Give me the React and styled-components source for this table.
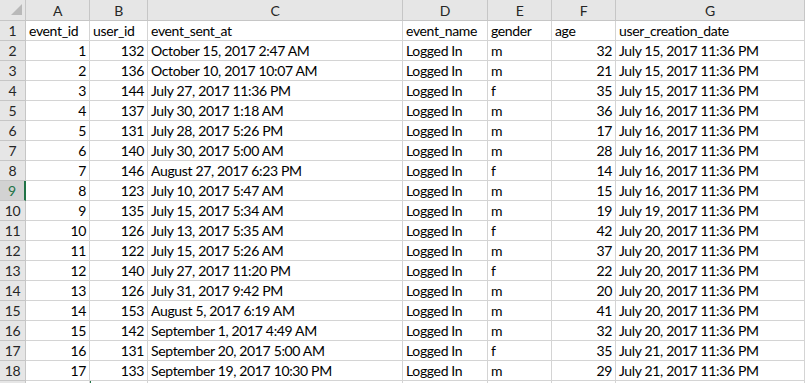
import React from 'react'
import styled, { createGlobalStyle } from 'styled-components'

const GlobalStyle = createGlobalStyle`
	html, body {
		margin: 0;
		padding: 0;
		background: #ffffff;
		overflow: hidden;
	}
`

const COLUMNS = '26px 64px 58px 255px 85px 64px 64px 1fr'

const Sheet = styled.div`
	width: 805px;
	height: 383px;
	overflow: hidden;
	font-family: Lato, 'Liberation Sans', sans-serif;
	font-size: 14px;
	letter-spacing: -0.35px;
	color: #000;
	background: #fff;
`

const Row = styled.div`
	display: grid;
	grid-template-columns: ${COLUMNS};
	height: ${props => (props.head ? '21px' : '20px')};
`

const ColumnHead = styled.div`
	box-sizing: border-box;
	background: #e6e6e6;
	border-right: 1px solid #c6c6c6;
	border-bottom: 1px solid #c6c6c6;
	color: #262626;
	display: flex;
	align-items: center;
	justify-content: center;
	padding-top: 1px;
`

const Corner = styled(ColumnHead)`
	position: relative;
	svg {
		position: absolute;
		left: 11px;
		top: 4px;
	}
`

const RowHead = styled.div`
	box-sizing: border-box;
	background: ${props => (props.selected ? '#d2d2d2' : '#e6e6e6')};
	color: ${props => (props.selected ? '#217346' : '#262626')};
	border-right: ${props =>
		props.selected ? '2px solid #217346' : '1px solid #c6c6c6'};
	border-bottom: 1px solid #c6c6c6;
	display: flex;
	align-items: center;
	justify-content: center;
`

const Cell = styled.div`
	box-sizing: border-box;
	position: relative;
	border-right: 1px solid #d4d4d4;
	border-bottom: 1px solid #d4d4d4;
	padding: 0 ${props => (props.num ? '3px' : '2px')} 0 3px;
	display: flex;
	align-items: center;
	justify-content: ${props => (props.num ? 'flex-end' : 'flex-start')};
	white-space: nowrap;
	overflow: hidden;
	${props =>
		props.marker &&
		`
		&::before {
			content: '';
			position: absolute;
			left: -2px;
			top: 0;
			width: 3px;
			height: 3px;
			background: #217346;
		}
	`}
`

const letters = ['A', 'B', 'C', 'D', 'E', 'F', 'G']

const header = [
	'event_id',
	'user_id',
	'event_sent_at',
	'event_name',
	'gender',
	'age',
	'user_creation_date'
]

const rows = [
	[1, 132, 'October 15, 2017 2:47 AM', 'm', 32, 'July 15, 2017 11:36 PM'],
	[2, 136, 'October 10, 2017 10:07 AM', 'm', 21, 'July 15, 2017 11:36 PM'],
	[3, 144, 'July 27, 2017 11:36 PM', 'f', 35, 'July 15, 2017 11:36 PM'],
	[4, 137, 'July 30, 2017 1:18 AM', 'm', 36, 'July 16, 2017 11:36 PM'],
	[5, 131, 'July 28, 2017 5:26 PM', 'm', 17, 'July 16, 2017 11:36 PM'],
	[6, 140, 'July 30, 2017 5:00 AM', 'm', 28, 'July 16, 2017 11:36 PM'],
	[7, 146, 'August 27, 2017 6:23 PM', 'f', 14, 'July 16, 2017 11:36 PM'],
	[8, 123, 'July 10, 2017 5:47 AM', 'm', 15, 'July 16, 2017 11:36 PM'],
	[9, 135, 'July 15, 2017 5:34 AM', 'm', 19, 'July 19, 2017 11:36 PM'],
	[10, 126, 'July 13, 2017 5:35 AM', 'f', 42, 'July 20, 2017 11:36 PM'],
	[11, 122, 'July 15, 2017 5:26 AM', 'm', 37, 'July 20, 2017 11:36 PM'],
	[12, 140, 'July 27, 2017 11:20 PM', 'f', 22, 'July 20, 2017 11:36 PM'],
	[13, 126, 'July 31, 2017 9:42 PM', 'm', 20, 'July 20, 2017 11:36 PM'],
	[14, 153, 'August 5, 2017 6:19 AM', 'm', 41, 'July 20, 2017 11:36 PM'],
	[15, 142, 'September 1, 2017 4:49 AM', 'm', 32, 'July 20, 2017 11:36 PM'],
	[16, 131, 'September 20, 2017 5:00 AM', 'f', 35, 'July 21, 2017 11:36 PM'],
	[17, 133, 'September 19, 2017 10:30 PM', 'm', 29, 'July 21, 2017 11:36 PM']
]

const SELECTED_ROW = 9

export default function App() {
	return (
		<Sheet>
			<GlobalStyle />
			<Row head>
				<Corner>
					<svg width="11" height="11" viewBox="0 0 11 11">
						<polygon points="11,0 11,11 0,11" fill="#b9b9b9" />
					</svg>
				</Corner>
				{letters.map(l => (
					<ColumnHead key={l}>{l}</ColumnHead>
				))}
			</Row>
			<Row>
				<RowHead>1</RowHead>
				{header.map(h => (
					<Cell key={h}>{h}</Cell>
				))}
			</Row>
			{rows.map((r, i) => {
				const n = i + 2
				const [id, user, sent, gender, age, created] = r
				return (
					<Row key={n}>
						<RowHead selected={n === SELECTED_ROW}>{n}</RowHead>
						<Cell num>{id}</Cell>
						<Cell num>{user}</Cell>
						<Cell>{sent}</Cell>
						<Cell>Logged In</Cell>
						<Cell>{gender}</Cell>
						<Cell num>{age}</Cell>
						<Cell>{created}</Cell>
					</Row>
				)
			})}
			{/* only the top edge of row 19 is in view */}
			<Row>
				<RowHead />
				<Cell />
				<Cell marker />
				<Cell />
				<Cell />
				<Cell />
				<Cell />
				<Cell />
			</Row>
		</Sheet>
	)
}
